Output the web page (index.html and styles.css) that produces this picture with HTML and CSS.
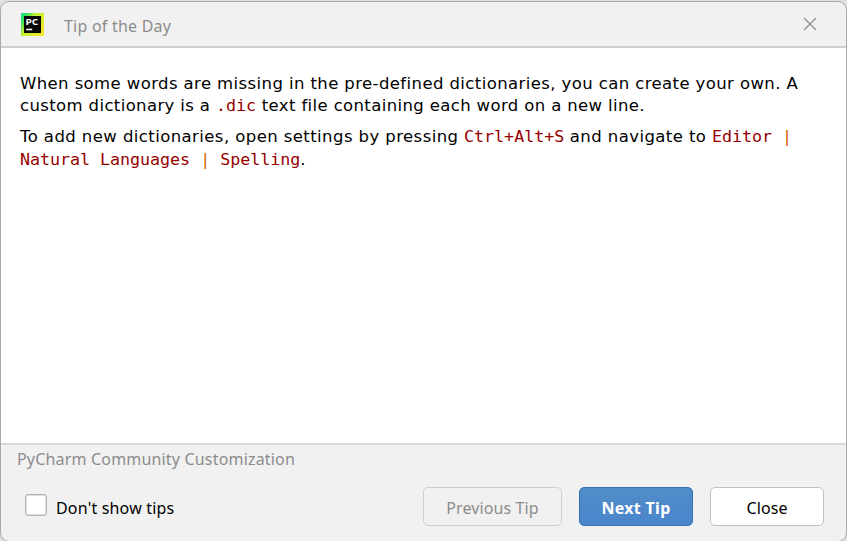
FILE: index.html
```html
<!DOCTYPE html>
<html lang="en">
<head>
<meta charset="utf-8">
<title>Tip of the Day</title>
<link rel="stylesheet" href="styles.css">
</head>
<body>
<main class="dialog">
  <header class="titlebar">
    <svg class="logo" width="23" height="23" viewBox="0 0 23 23">
      <defs>
        <linearGradient id="frame" x1="0" y1="0" x2="1" y2="0.65">
          <stop offset="0" stop-color="#12e583"/>
          <stop offset="0.2" stop-color="#35e45c"/>
          <stop offset="0.48" stop-color="#c5ee2d"/>
          <stop offset="1" stop-color="#f0e82c"/>
        </linearGradient>
      </defs>
      <rect width="23" height="23" fill="url(#frame)"/>
      <rect x="3" y="3" width="17" height="17" fill="#050807"/>
      <text class="logo-text" x="4.4" y="11.8" textLength="12.8" lengthAdjust="spacingAndGlyphs">PC</text>
      <rect x="5.2" y="15.7" width="6" height="1.6" fill="#fff"/>
    </svg>
    <h1 class="title">Tip of the Day</h1>
    <svg class="close-icon" width="14" height="14" viewBox="0 0 14 14"><path d="M1 1L13 13M13 1L1 13" fill="none" stroke="#8c8c8c" stroke-width="1.2"/></svg>
  </header>
  <section class="tip">
    <p>When some words are missing in the pre-defined dictionaries, you can create your own. A<br><span class="definition">custom dictionary is a <code>.dic</code> text file containing each word on a new line.</span></p>
    <p class="settings">To add new dictionaries, open settings by pressing <code>Ctrl+Alt+S</code> and navigate to <code>Editor <b>|</b></code><br><code>Natural Languages <b>|</b> Spelling</code>.</p>
  </section>
  <footer class="footer">
    <div class="category">PyCharm Community Customization</div>
    <div class="actions">
      <label class="check"><span class="box"></span><span class="check-label">Don't show tips</span></label>
      <button class="btn previous" disabled>Previous Tip</button>
      <button class="btn next">Next Tip</button>
      <button class="btn close">Close</button>
    </div>
  </footer>
</main>
</body>
</html>
```
FILE: styles.css
```css
* { box-sizing: border-box; }
body {
  margin: 0;
  height: 541px;
  overflow: hidden;
  background: #e0e0e0;
  font-family: "Noto Sans", sans-serif;
  font-size: 16px;
}
.dialog {
  margin-top: 1px;
  height: 541px;
  display: flex;
  flex-direction: column;
  border: 1px solid #a9a9a9;
  border-radius: 9px;
  background: #f1f1f1;
  overflow: hidden;
}
.titlebar {
  display: flex;
  align-items: center;
  height: 46px;
  padding: 0 29px 0 20px;
  border-bottom: 2px solid #d0d0d0;
}
.logo { display: block; }
.logo-text { font: bold 9.6px "Open Sans", sans-serif; fill: #fff; }
.title {
  margin: 4px 0 0 20px;
  font-size: 16px;
  font-weight: 400;
  color: #8c8c8c;
  letter-spacing: 0.22px;
}
.close-icon { margin-left: auto; }
.tip {
  height: 395px;
  padding: 25px 19px 0;
  background: #fff;
  color: #000;
  font: 16.5px/22px "DejaVu Sans", sans-serif;
  letter-spacing: 0.4px;
  white-space: nowrap;
}
.tip p { margin: 0 0 8px; }
.definition { letter-spacing: 0.37px; }
.tip .settings { line-height: 23px; letter-spacing: 0.42px; }
code { font: 16.7px/16px "DejaVu Sans Mono", monospace; letter-spacing: 0; color: #960000; }
.settings code { letter-spacing: -0.04px; }
code b { font-weight: 400; color: #d06000; }
.footer { flex: 1; border-top: 2px solid #d8d8d8; }
.category { padding: 3px 16px 0; line-height: 22px; color: #8c8c8c; letter-spacing: 0.18px; }
.actions { display: flex; align-items: center; padding: 17px 22px 0 24px; }
.check { display: flex; align-items: center; margin-right: auto; }
.box { width: 22px; height: 22px; margin-top: -4px; border: 1px solid #b0b0b0; border-radius: 3px; background: #fff; box-shadow: inset 0 0 0 0.5px #c4c4c4; }
.check-label { margin: 3px 0 0 9px; letter-spacing: 0.18px; }
.btn {
  height: 39px;
  margin-left: 17px;
  padding: 3px 0 0;
  border: 1px solid #bfbfbf;
  border-radius: 5px;
  font: 16px "Noto Sans", sans-serif;
  letter-spacing: 0.1px;
  background: #fff;
  color: #000;
}
.previous { width: 139px; color: #8c8c8c; background: transparent; border-color: #cfcfcf; }
.next { width: 114px; color: #fff; font-weight: 700; letter-spacing: 0.3px; border-color: #3470b2; background: linear-gradient(#518dc8, #4985cb); }
.close { width: 114px; }
```
